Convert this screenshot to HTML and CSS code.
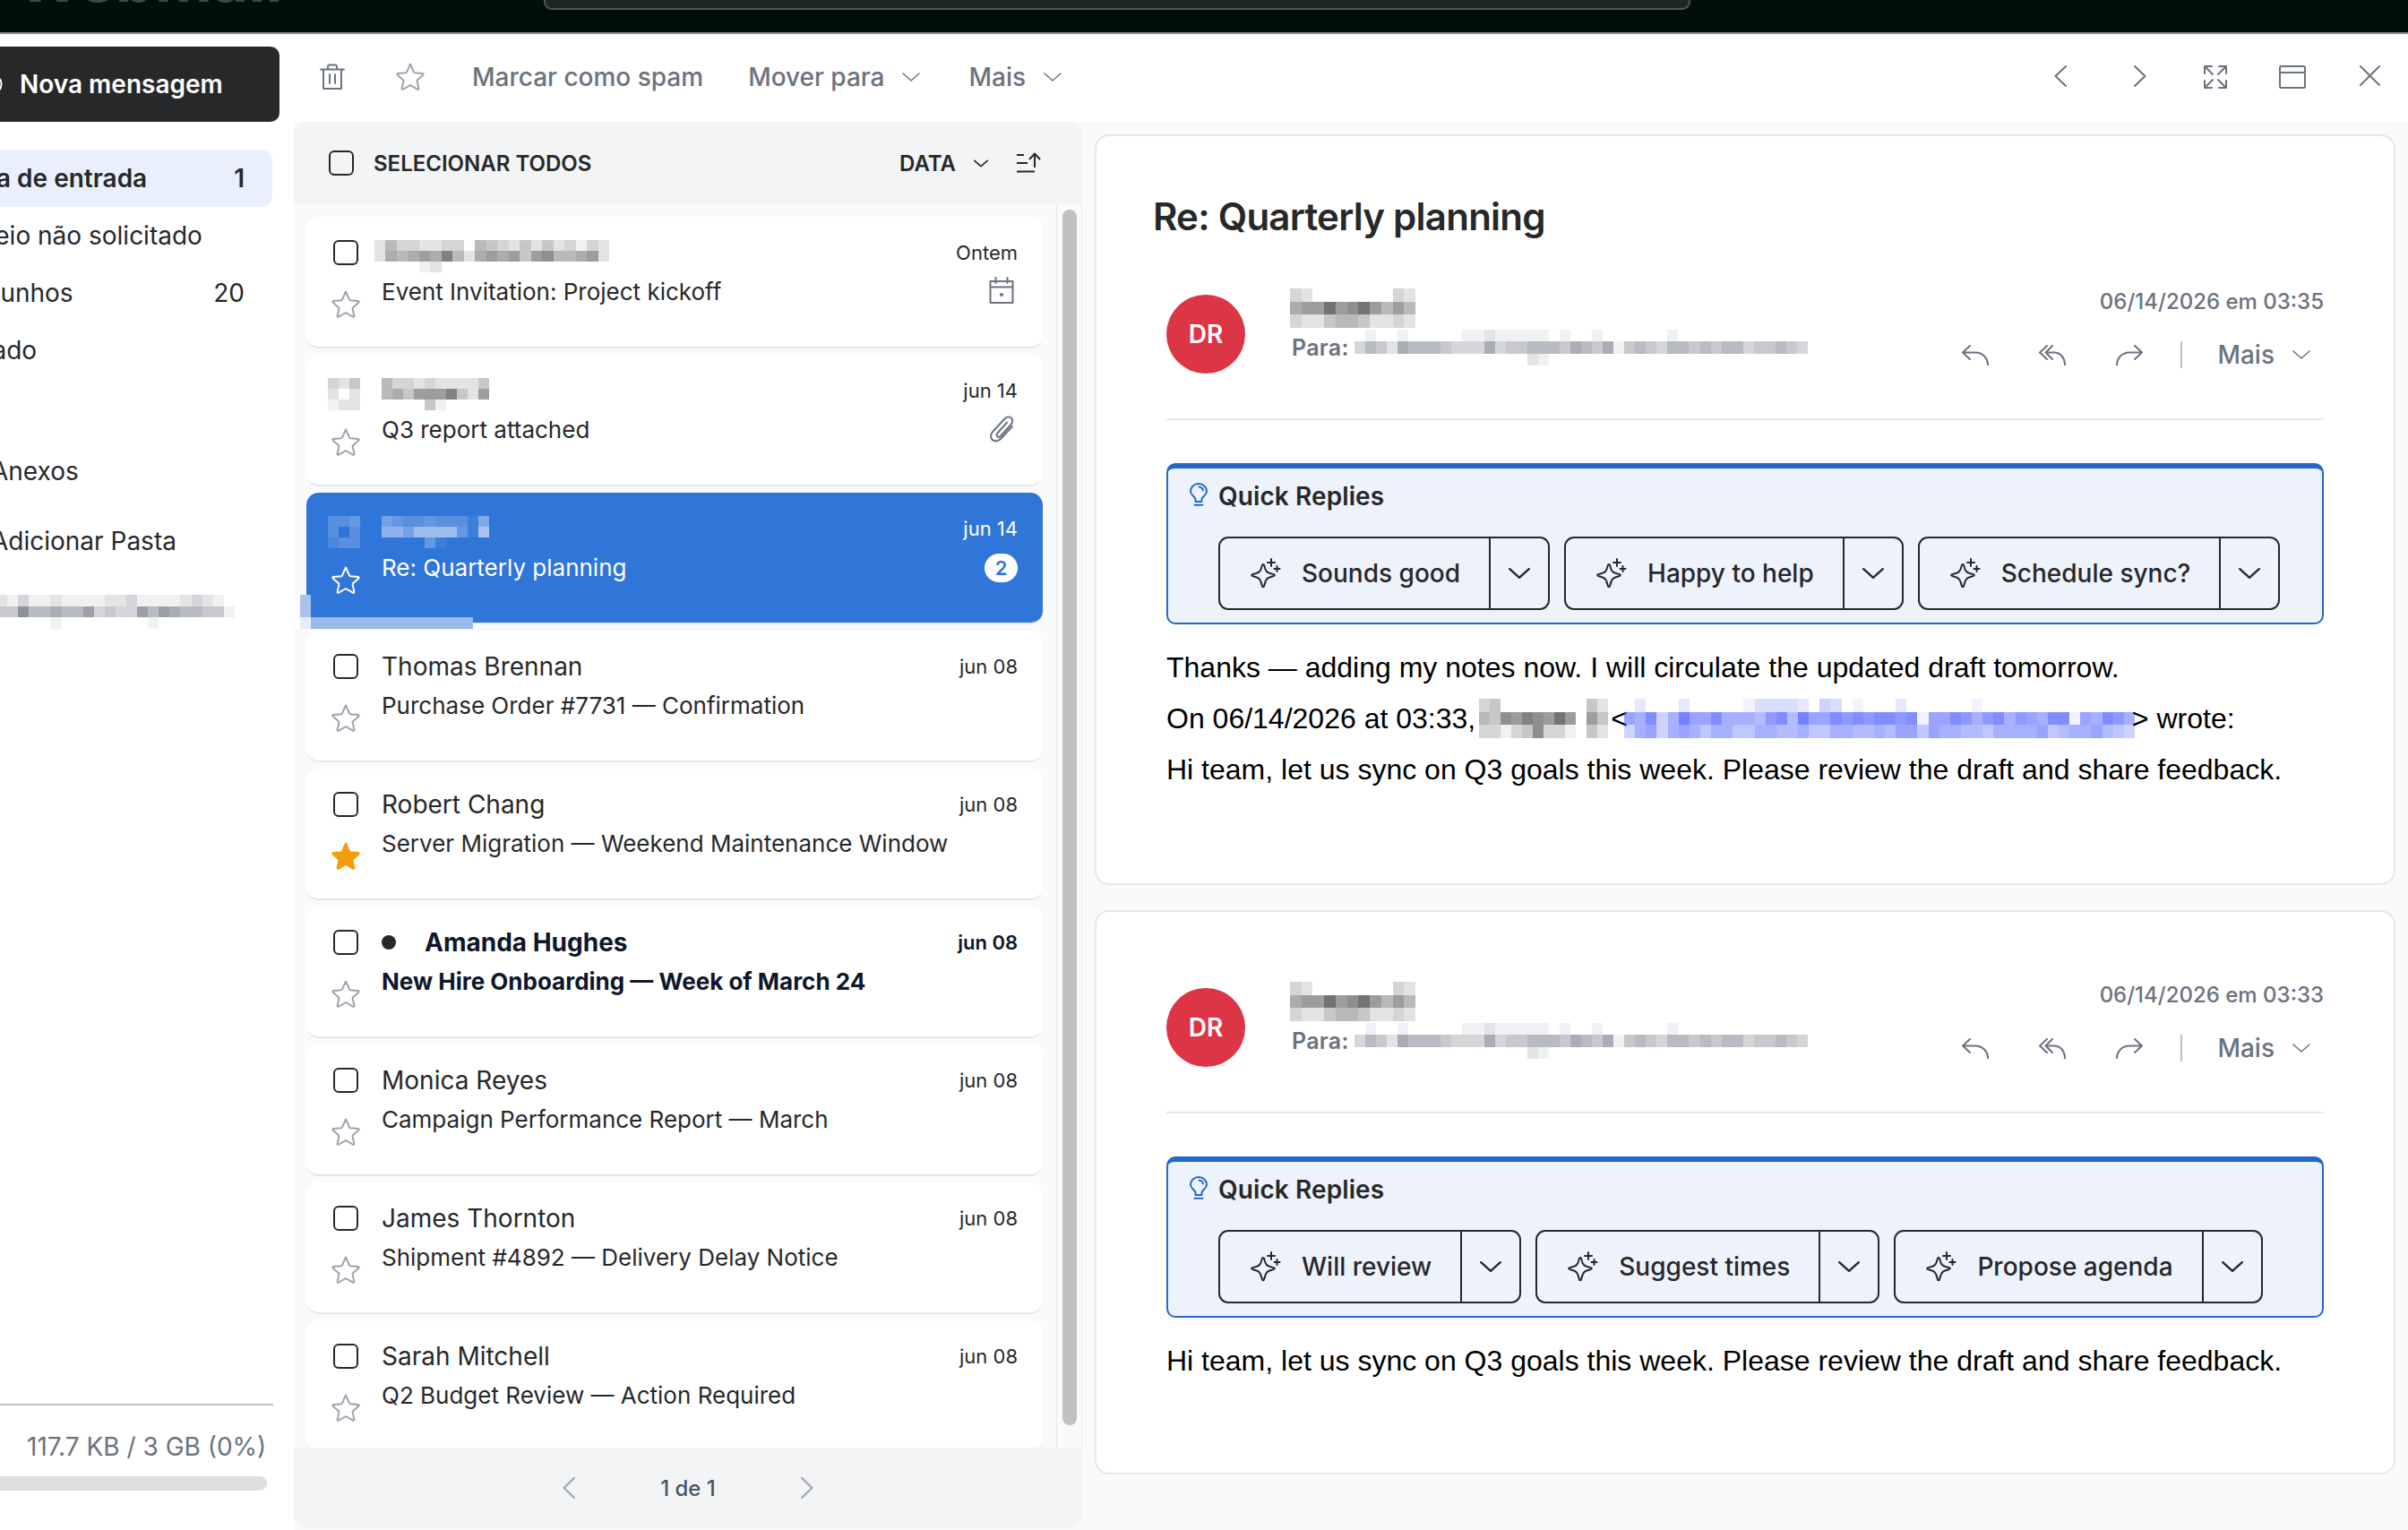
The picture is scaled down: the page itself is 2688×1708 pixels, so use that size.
FILE: index.html
```html
<!DOCTYPE html>
<html lang="pt">
<head>
  <meta charset="UTF-8">
  <title>Webmail</title>
  <link rel="stylesheet" href="styles.css">
</head>
<body>
  <!-- shared icons -->
  <svg class="sprite">
    <symbol id="star" viewBox="0 0 32 31"><path d="M16 1.5 20 10.4Q20.3 11.1 21.1 11.2L29.6 12Q31.4 12.4 30.2 13.8L24 19.2Q23.4 19.8 23.6 20.6L25.4 28.6Q25.5 30.3 23.9 29.6L16.8 25.5Q16 25.1 15.2 25.5L8.100 29.600Q6.500 30.300 6.600 28.600L8.400 20.600Q8.600 19.800 8 19.200L1.800 13.800Q.6 12.400 2.400 12L10.900 11.200Q11.700 11.100 12 10.400Z"/></symbol>
    <symbol id="down" viewBox="0 0 20 10"><path d="M1 1l9 8 9-8"/></symbol>
    <symbol id="left" viewBox="0 0 14 24"><path d="M13 1 1.500 12 13 23"/></symbol>
    <symbol id="right" viewBox="0 0 14 24"><path d="M1 1l11.500 11L1 23"/></symbol>
    <symbol id="reply" viewBox="0 0 30 23"><path d="M9 1 1 8.500 9 16M1 8.500h14c8 0 14 6 14 14"/></symbol>
    <symbol id="reply-all" viewBox="0 0 30 23"><path d="M9 1 1 8.500 9 16M15 1 7.500 8.500 15 16M7.500 8.500H17c7 0 12 6 12 14"/></symbol>
    <symbol id="forward" viewBox="0 0 30 23"><path d="M21 1l8 7.500-8 7.500M29 8.500H15c-8 0-14 6-14 14"/></symbol>
    <symbol id="bulb" viewBox="0 0 20 26"><path d="M6.500 21v-2.500C6.500 15.500 1 14 1 9.500a9 8.500 0 0 1 18 0c0 4.500-5.500 6-5.500 9V21zM5.500 24.800h9M10.500 4.500c2.500.2 4 1.600 4.500 4"/></symbol>
    <symbol id="sparkle" viewBox="0 0 34 34"><path d="M14 7c.8 0 1 .4 1.300 1.600 1.300 6.200 2.500 7.600 9.800 9.300 2.400.6 2.400 1.800 0 2.400-6.800 1.600-8.300 3.200-9.800 10.200-.5 2.400-2.100 2.400-2.600 0-1.500-7-3-8.600-9.800-10.200-2.400-.6-2.400-1.800 0-2.400 7.300-1.700 8.500-3.100 9.800-9.300C13 7.400 13.200 7 14 7zM23 1v8M19 5h8M29.500 9v6M26.500 12h6"/></symbol>
  </svg>

  <header class="topbar">
    <div class="brand">Webmail</div>
    <div class="search"></div>
  </header>

  <div class="app">
    <aside class="sidebar">
      <button class="compose"><svg class="icon compose-icon" viewBox="0 0 24 24"><circle cx="12" cy="12" r="10.500"/></svg>Nova mensagem</button>
      <nav class="folders">
        <a class="folder active"><span>Caixa de entrada</span><span>1</span></a>
        <a class="folder"><span>Correio não solicitado</span></a>
        <a class="folder"><span>Rascunhos</span><span>20</span></a>
        <a class="folder"><span>Enviado</span></a>
      </nav>
      <div class="views">
        <a>Anexos</a>
        <a>Adicionar Pasta</a>
      </div>
      <div class="mosaic account" data-rows="21311211112231111232100|44855655734337576554410|00000100000000100000000"></div>
      <div class="quota">
        <div class="quota-text">117.7 KB / 3 GB (0%)</div>
        <div class="quota-bar"></div>
      </div>
    </aside>

    <main class="main">
      <div class="toolbar">
        <svg class="icon trash" viewBox="0 0 28 30"><path d="M1 6.500h26M4 6.500V28h20V6.500M9 6V3.500Q9 1.500 11 1.500h6q2 0 2 2V6M11 12v10M17 12v10"/></svg>
        <svg class="icon star"><use href="#star"/></svg>
        <span class="tool spam">Marcar como spam</span>
        <span class="tool move">Mover para <svg class="icon down"><use href="#down"/></svg></span>
        <span class="tool more">Mais <svg class="icon down"><use href="#down"/></svg></span>
        <div class="window-tools">
          <span><svg class="icon arrow"><use href="#left"/></svg></span>
          <span><svg class="icon arrow"><use href="#right"/></svg></span>
          <span><svg class="icon expand" viewBox="0 0 26 26"><path d="M1 9V1h8M1 1l9 9M17 1h8v8M25 1l-9 9M1 17v8h8M1 25l9-9M17 25h8v-8M25 25l-9-9"/></svg></span>
          <span><svg class="icon window" viewBox="0 0 30 26"><rect x="1" y="1" width="28" height="24" rx="1.500"/><path d="M1 8h28"/></svg></span>
          <span><svg class="icon close" viewBox="0 0 24 24"><path d="M1 1l22 22M23 1 1 23"/></svg></span>
        </div>
      </div>

      <div class="content">
        <section class="list">
          <div class="list-header">
            <i class="checkbox"></i>
            <span class="select-all">SELECIONAR TODOS</span>
            <span class="sort">DATA</span>
            <svg class="icon sort-down"><use href="#down"/></svg>
            <svg class="icon sort-icon" viewBox="0 0 28 24"><path d="M1 3h8M1 12h12M1 21.500h20M21 17V2M15 8l6-6.500L27 8"/></svg>
          </div>
          <div class="list-body">
            <div class="mails">
              <article class="mail">
                <div class="mail-marks"><i class="checkbox"></i><svg class="icon star"><use href="#star"/></svg></div>
                <div class="mail-text"><div class="from"><div class="mosaic from-wide" data-rows="253322330543242423132|265676952676747855672|000012000000000000000"></div></div><div class="about">Event Invitation: Project kickoff</div></div>
                <div class="mail-side"><time>Ontem</time><svg class="icon calendar" viewBox="0 0 28 30"><path d="M1.500 4h25v24h-25zM1.500 10.500h25M7.500 0v6M20.500 0v6"/><circle class="solid" cx="14" cy="19" r="2"/></svg></div>
              </article>
              <article class="mail">
                <div class="mail-marks"><div class="mosaic mark" data-rows="324|202|122"></div><svg class="icon star"><use href="#star"/></svg></div>
                <div class="mail-text"><div class="from"><div class="mosaic from-short" data-rows="5332322224|5647779427|0000410000"></div></div><div class="about">Q3 report attached</div></div>
                <div class="mail-side"><time>jun 14</time><svg class="icon clip" viewBox="0 0 28 30"><path d="M20 7.500 9.500 19.500c-2.500 3 1 6 3.700 3L24.500 10c5-6-2-12-7.500-6L4.500 17.500c-7 8 2.500 15 9 8L26 12"/></svg></div>
              </article>
              <article class="mail selected">
                <div class="mail-marks"><div class="mosaic mark" data-rows="334|303|233"></div><svg class="icon star"><use href="#star"/></svg></div>
                <div class="mail-text"><div class="from"><div class="mosaic from-short" data-rows="5433433316|7758888419|0000410000"></div></div><div class="about">Re: Quarterly planning</div></div>
                <div class="mail-side"><time>jun 14</time><b class="count">2</b></div>
                <div class="ghost"><i></i><i></i></div>
              </article>
              <article class="mail">
                <div class="mail-marks"><i class="checkbox"></i><svg class="icon star"><use href="#star"/></svg></div>
                <div class="mail-text"><div class="from">Thomas Brennan</div><div class="about">Purchase Order #7731 — Confirmation</div></div>
                <div class="mail-side"><time>jun 08</time></div>
              </article>
              <article class="mail">
                <div class="mail-marks"><i class="checkbox"></i><svg class="icon star starred"><use href="#star"/></svg></div>
                <div class="mail-text"><div class="from">Robert Chang</div><div class="about">Server Migration — Weekend Maintenance Window</div></div>
                <div class="mail-side"><time>jun 08</time></div>
              </article>
              <article class="mail unread">
                <div class="mail-marks"><i class="checkbox"></i><svg class="icon star"><use href="#star"/></svg></div>
                <div class="mail-text"><div class="from"><i class="dot"></i>Amanda Hughes</div><div class="about">New Hire Onboarding — Week of March 24</div></div>
                <div class="mail-side"><time>jun 08</time></div>
              </article>
              <article class="mail">
                <div class="mail-marks"><i class="checkbox"></i><svg class="icon star"><use href="#star"/></svg></div>
                <div class="mail-text"><div class="from">Monica Reyes</div><div class="about">Campaign Performance Report — March</div></div>
                <div class="mail-side"><time>jun 08</time></div>
              </article>
              <article class="mail">
                <div class="mail-marks"><i class="checkbox"></i><svg class="icon star"><use href="#star"/></svg></div>
                <div class="mail-text"><div class="from">James Thornton</div><div class="about">Shipment #4892 — Delivery Delay Notice</div></div>
                <div class="mail-side"><time>jun 08</time></div>
              </article>
              <article class="mail">
                <div class="mail-marks"><i class="checkbox"></i><svg class="icon star"><use href="#star"/></svg></div>
                <div class="mail-text"><div class="from">Sarah Mitchell</div><div class="about">Q2 Budget Review — Action Required</div></div>
                <div class="mail-side"><time>jun 08</time></div>
              </article>
            </div>
            <div class="scrollbar"><div class="thumb"></div></div>
          </div>
          <div class="pager">
            <svg class="icon arrow"><use href="#left"/></svg>
            <span>1 de 1</span>
            <svg class="icon arrow"><use href="#right"/></svg>
          </div>
        </section>

        <section class="reader">
          <article class="message first">
            <h1 class="subject">Re: Quarterly planning</h1>
            <div class="message-header">
              <div class="avatar">DR</div>
              <div class="people">
                <div class="mosaic sender" data-rows="32000000032|677a78a7575|32245542232"></div>
                <div class="to">Para:<div class="mosaic address" data-rows="010010000011211111010010000001000000000000|354265554333634455546546145435545455344543|000000000000000021000000000000000000000000"></div></div>
              </div>
              <div class="meta">
                <time>06/14/2026 em 03:35</time>
                <div class="actions">
                  <svg class="icon reply"><use href="#reply"/></svg>
                  <svg class="icon reply"><use href="#reply-all"/></svg>
                  <svg class="icon reply"><use href="#forward"/></svg>
                  <i class="separator"></i>
                  <span>Mais</span>
                  <svg class="icon down"><use href="#down"/></svg>
                </div>
              </div>
            </div>
            <div class="quick">
              <div class="quick-title"><svg class="icon bulb"><use href="#bulb"/></svg>Quick Replies</div>
              <div class="quick-buttons">
                <div class="split"><button><svg class="icon sparkle"><use href="#sparkle"/></svg>Sounds good</button><button class="drop"><svg class="icon"><use href="#down"/></svg></button></div>
                <div class="split"><button><svg class="icon sparkle"><use href="#sparkle"/></svg>Happy to help</button><button class="drop"><svg class="icon"><use href="#down"/></svg></button></div>
                <div class="split"><button><svg class="icon sparkle"><use href="#sparkle"/></svg>Schedule sync?</button><button class="drop"><svg class="icon"><use href="#down"/></svg></button></div>
              </div>
            </div>
            <div class="body">
              <p>Thanks — adding my notes now. I will circulate the updated draft tomorrow.</p>
              <p>On 06/14/2026 at 03:33,<span class="mosaic quoted" data-rows="340000000042|5487987a7074|331348331042"></span>&lt;<span class="mosaic link" data-rows="02000200000133332043010002000000100000000000000|87a47b88a77769a6b88a9a9aa9a188a979a7987aa187a97|47847875775577667557766768858776657777856778654"></span>&gt; wrote:</p>
              <p>Hi team, let us sync on Q3 goals this week. Please review the draft and share feedback.</p>
            </div>
          </article>

          <article class="message second">
            <div class="message-header">
              <div class="avatar">DR</div>
              <div class="people">
                <div class="mosaic sender" data-rows="32000000032|677a78a7575|32245542232"></div>
                <div class="to">Para:<div class="mosaic address" data-rows="010010000011211111010010000001000000000000|354265554333634455546546145435545455344543|000000000000000021000000000000000000000000"></div></div>
              </div>
              <div class="meta">
                <time>06/14/2026 em 03:33</time>
                <div class="actions">
                  <svg class="icon reply"><use href="#reply"/></svg>
                  <svg class="icon reply"><use href="#reply-all"/></svg>
                  <svg class="icon reply"><use href="#forward"/></svg>
                  <i class="separator"></i>
                  <span>Mais</span>
                  <svg class="icon down"><use href="#down"/></svg>
                </div>
              </div>
            </div>
            <div class="quick">
              <div class="quick-title"><svg class="icon bulb"><use href="#bulb"/></svg>Quick Replies</div>
              <div class="quick-buttons">
                <div class="split"><button><svg class="icon sparkle"><use href="#sparkle"/></svg>Will review</button><button class="drop"><svg class="icon"><use href="#down"/></svg></button></div>
                <div class="split"><button><svg class="icon sparkle"><use href="#sparkle"/></svg>Suggest times</button><button class="drop"><svg class="icon"><use href="#down"/></svg></button></div>
                <div class="split"><button><svg class="icon sparkle"><use href="#sparkle"/></svg>Propose agenda</button><button class="drop"><svg class="icon"><use href="#down"/></svg></button></div>
              </div>
            </div>
            <div class="body">
              <p>Hi team, let us sync on Q3 goals this week. Please review the draft and share feedback.</p>
            </div>
          </article>
        </section>
      </div>
    </main>
  </div>
  <script src="script.js"></script>
</body>
</html>
```
FILE: script.js
```js
// Draw the mosaics that hide names and addresses.
// Each row is a string of hex digits, one per cell: 0 is clear, f is darkest.
document.querySelectorAll(".mosaic").forEach(function (el) {
  var rows = el.dataset.rows.split("|");
  var cols = rows[0].length;
  var cells = "";
  rows.forEach(function (row, y) {
    for (var x = 0; x < cols; x++) {
      var tone = parseInt(row[x], 16);
      if (tone > 0) {
        cells += '<rect x="' + x + '" y="' + y + '" width="1" height="1" fill-opacity="' + (tone * 0.065).toFixed(3) + '"/>';
      }
    }
  });
  el.innerHTML = '<svg viewBox="0 0 ' + cols + " " + rows.length + '" preserveAspectRatio="none" shape-rendering="crispEdges">' + cells + "</svg>";
});
```
FILE: styles.css
```css
* {
  box-sizing: border-box;
}
body {
  margin: 0;
  width: 2688px;
  height: 1708px;
  overflow: hidden;
  display: flex;
  flex-direction: column;
  background: #fff;
  color: #27282a;
  font-family: Inter, sans-serif;
  font-size: 28px;
}
button {
  font: inherit;
  color: inherit;
  background: none;
  border: none;
  padding: 0;
}
i {
  font-style: normal;
}
.sprite {
  display: none;
}
.icon {
  flex: none;
  fill: none;
  stroke: currentColor;
  stroke-width: 2;
  stroke-linecap: round;
  stroke-linejoin: round;
  overflow: visible;
}
.icon .solid {
  fill: currentColor;
  stroke: none;
}
.mosaic {
  fill: #27282a;
  flex: none;
}
.mosaic svg {
  display: block;
  width: 100%;
  height: 100%;
}

/* top bar */
.topbar {
  height: 38px;
  flex: none;
  display: flex;
  align-items: flex-start;
  background: #000f0a;
  border-bottom: 2px solid #8e8e8e;
  overflow: hidden;
}
.brand {
  width: 607px;
  padding-left: 18px;
  font-size: 70px;
  font-weight: 700;
  line-height: 70px;
  margin-top: -58px;
  color: #3f4845;
}
.search {
  width: 1280px;
  height: 11px;
  background: #1c2724;
  border: 2px solid #4e5755;
  border-top: none;
  border-radius: 0 0 9px 9px;
}

/* sidebar */
.app {
  flex: 1;
  display: flex;
  min-height: 0;
}
.sidebar {
  width: 328px;
  flex: none;
  display: flex;
  flex-direction: column;
  padding: 14px 0 44px;
  overflow: hidden;
}
.compose {
  width: 312px;
  height: 84px;
  flex: none;
  display: flex;
  align-items: center;
  background: #27282a;
  color: #fff;
  font-weight: 600;
  border-radius: 0 10px 10px 0;
}
.compose-icon {
  width: 24px;
  height: 24px;
  margin: 0 19px 0 -21px;
}
.folders {
  margin: 31px 0 71px -64px;
}
.folder {
  width: 368px;
  height: 64px;
  display: flex;
  align-items: center;
  justify-content: space-between;
  padding-right: 31px;
}
.folder.active {
  background: #eaf0fb;
  border-radius: 12px;
  font-weight: 600;
}
.views {
  display: flex;
  flex-direction: column;
  gap: 14px;
  margin-left: -10px;
}
.views a {
  line-height: 64px;
}
.account {
  width: 278px;
  height: 38px;
  margin: 28px 0 0 -4px;
  fill: #252d40;
}
.quota {
  width: 305px;
  margin-top: auto;
  border-top: 2px solid #bdc3c3;
  color: #6b7280;
}
.quota-text {
  line-height: 92px;
  padding-left: 30px;
}
.quota-bar {
  width: 298px;
  height: 16px;
  margin-top: -13px;
  background: #dfdfdf;
  border-radius: 0 8px 8px 0;
}

/* toolbar */
.main {
  flex: 1;
  display: flex;
  flex-direction: column;
}
.toolbar {
  height: 98px;
  flex: none;
  display: flex;
  align-items: center;
  padding: 0 0 3px 29px;
  color: #6b7280;
  font-weight: 500;
}
.trash {
  width: 28px;
  height: 30px;
}
.star {
  width: 32px;
  height: 31px;
  color: #9ca3af;
}
.toolbar .star {
  margin-left: 57px;
}
.tool {
  display: flex;
  align-items: center;
}
.spam {
  margin-left: 53px;
}
.move {
  margin-left: 50px;
}
.more {
  margin-left: 54px;
}
.down {
  width: 20px;
  height: 10px;
  margin-left: 20px;
  stroke-width: 1.5;
}
.window-tools {
  margin-left: auto;
  display: flex;
}
.window-tools span {
  width: 86px;
  display: flex;
  justify-content: center;
}
.window-tools span:first-child {
  padding-right: 3px;
}
.window-tools span:nth-child(2) {
  padding-left: 3px;
}
.arrow {
  width: 14px;
  height: 24px;
}
.expand {
  width: 26px;
  height: 26px;
}
.window {
  width: 30px;
  height: 26px;
}
.close {
  width: 23px;
  height: 23px;
}

/* mail list */
.content {
  flex: 1;
  display: flex;
  background: #f9fafc;
  min-height: 0;
}
.list {
  width: 880px;
  height: 1570px;
  flex: none;
}
.list-header {
  height: 92px;
  display: flex;
  align-items: center;
  padding: 0 46px 0 39px;
  background: #f3f4f6;
  border-radius: 14px 14px 0 0;
  font-size: 24px;
  font-weight: 600;
}
.checkbox {
  width: 28px;
  height: 28px;
  flex: none;
  border: 2px solid #27282a;
  border-radius: 6px;
}
.select-all {
  margin-left: 22px;
}
.sort {
  margin-left: auto;
}
.sort-down {
  width: 16px;
  height: 9px;
  margin: 0 31px 0 20px;
}
.sort-icon {
  width: 28px;
  height: 24px;
  stroke-linecap: butt;
}
.list-body {
  height: 1388px;
  display: flex;
  overflow: hidden;
}
.mails {
  width: 851px;
  padding: 14px 15px 0 14px;
}
.mail {
  position: relative;
  height: 147px;
  margin-bottom: 7px;
  display: flex;
  padding: 26px 28px 0 30px;
  background: #fff;
  border-bottom: 2px solid #e3e7ec;
  border-radius: 14px;
}
.mail-marks {
  width: 54px;
  flex: none;
}
.mail-marks .checkbox {
  display: block;
}
.mail-marks .star {
  display: block;
  margin: 28px 0 0 -2px;
}
.mark {
  width: 36px;
  height: 36px;
  margin: 0 0 -8px -6px;
}
.mail-text {
  flex: 1;
  white-space: nowrap;
}
.from {
  height: 28px;
  display: flex;
  line-height: 28px;
}
.from-wide {
  width: 262px;
  height: 36px;
  margin-left: -8px;
}
.from-short {
  width: 120px;
  height: 36px;
}
.about {
  margin-top: 14px;
  font-size: 26px;
  line-height: 32px;
}
.mail-side {
  display: flex;
  flex-direction: column;
  align-items: flex-end;
}
.mail-side time {
  font-size: 22px;
  line-height: 28px;
}
.calendar,
.clip {
  width: 28px;
  height: 30px;
  margin: 14px 4px 0 0;
  color: #6b7280;
}
.count {
  width: 37px;
  height: 32px;
  margin-top: 14px;
  border-radius: 16px;
  background: #fff;
  color: #3075d8;
  font-size: 22px;
  font-weight: 600;
  line-height: 32px;
  text-align: center;
}
.selected {
  background: #3075d8;
  background-clip: padding-box;
  color: #fff;
}
.selected .star {
  color: #fff;
}
.selected .mosaic {
  fill: #fff;
}
.starred {
  color: #f59e0b;
  fill: #f59e0b;
}
.unread {
  font-weight: 700;
}
.unread .mail-text,
.unread time {
  color: #0f172a;
}
.unread time {
  font-weight: 600;
}
.dot {
  width: 16px;
  height: 16px;
  margin: 6px 32px 0 0;
  border-radius: 50%;
  background: #27282a;
}
/* pale strip over the corner of the selected row */
.ghost {
  position: absolute;
  left: -20px;
  bottom: -7px;
  display: flex;
  align-items: flex-end;
  height: 38px;
  border-left: 13px solid #fdfdfd;
}
.ghost i:first-child {
  width: 12px;
  height: 38px;
  background: #a9c3ec;
  border-bottom: 13px solid #e5edf8;
}
.ghost i:last-child {
  width: 181px;
  height: 13px;
  background: #9ab8e8;
}
.scrollbar {
  width: 29px;
  padding: 6px 0 0 6px;
  background: #fafafa;
  border-left: 1px solid #e8e8e8;
  border-right: 1px solid #e8e8e8;
}
.thumb {
  width: 16px;
  height: 1357px;
  background: #c1c1c1;
  border-radius: 8px;
}
.pager {
  height: 90px;
  display: flex;
  align-items: center;
  justify-content: center;
  gap: 95px;
  background: #f3f4f6;
  border-radius: 0 0 14px 14px;
  font-size: 24px;
  font-weight: 500;
  color: #4b5563;
}
.pager .arrow {
  color: #9ca3af;
}

/* reader */
.reader {
  flex: 1;
  padding: 14px;
}
.message {
  padding: 0 78px;
  background: #fff;
  border: 2px solid #e5e7eb;
  border-radius: 16px;
}
.first {
  height: 838px;
  margin-bottom: 28px;
}
.second {
  height: 630px;
}
.subject {
  margin: 59px 0 0 -15px;
  font-size: 42px;
  font-weight: 600;
  line-height: 62px;
  letter-spacing: -0.75px;
}
.message-header {
  display: flex;
  height: 225px;
  padding-top: 85px;
  border-bottom: 2px solid #e5e9ec;
  color: #6b7280;
}
.subject + .message-header {
  height: 196px;
  padding-top: 56px;
}
.avatar {
  width: 88px;
  height: 88px;
  border-radius: 50%;
  background: #dc3545;
  color: #fff;
  font-weight: 600;
  line-height: 88px;
  text-align: center;
}
.people {
  margin: -7px 0 0 50px;
}
.sender {
  width: 140px;
  height: 44px;
}
.to {
  display: flex;
  align-items: center;
  margin-top: 2px;
  padding-left: 2px;
  font-size: 25px;
  font-weight: 600;
  letter-spacing: 0.3px;
}
.address {
  width: 506px;
  height: 40px;
  margin-left: 6px;
  fill: #252d40;
}
.meta {
  margin: -5px 0 0 auto;
  display: flex;
  flex-direction: column;
  align-items: flex-end;
  font-weight: 500;
}
.meta time {
  font-size: 24px;
  line-height: 26px;
}
.actions {
  height: 40px;
  margin: 26px 15px 0 0;
  display: flex;
  align-items: center;
}
.reply {
  width: 30px;
  height: 23px;
  margin-right: 56px;
}
.separator {
  width: 2px;
  height: 30px;
  margin: 0 39px 0 -14px;
  background: #bfbfbf;
}
.quick {
  height: 180px;
  margin-top: 48px;
  background: #eef2fb;
  border: 2px solid #2568cb;
  border-top-width: 6px;
  border-radius: 10px;
}
.quick-title {
  height: 62px;
  display: flex;
  align-items: center;
  padding-left: 24px;
  font-weight: 600;
  letter-spacing: 0.1px;
}
.bulb {
  width: 20px;
  height: 26px;
  margin: -4px 12px 0 0;
  color: #2568cb;
}
.quick-buttons {
  display: flex;
  gap: 16px;
  margin: 14px 0 0 56px;
}
.split {
  height: 82px;
  display: flex;
  border: 2px solid #27282a;
  border-radius: 11px;
  font-weight: 500;
}
.split button {
  display: flex;
  align-items: center;
  padding: 0 32px 0 34px;
}
.sparkle {
  width: 34px;
  height: 34px;
  margin-right: 23px;
}
.split .drop {
  width: 66px;
  justify-content: center;
  padding: 0;
  border-left: 2px solid #27282a;
}
.drop .icon {
  width: 24px;
  height: 12px;
}
.body {
  margin-top: 20px;
  color: #000;
  font-family: "Liberation Sans", Arial, sans-serif;
  font-size: 32px;
  line-height: 57px;
  white-space: nowrap;
}
.body p {
  margin: 0;
  height: 57px;
}
.body .mosaic {
  display: inline-block;
  height: 44px;
  vertical-align: -11px;
}
.quoted {
  width: 144px;
  margin: 0 3px 0 4px;
}
.body .link {
  width: 570px;
  margin: 0 -3px 0 -4px;
  fill: #3d50ff;
}
```
